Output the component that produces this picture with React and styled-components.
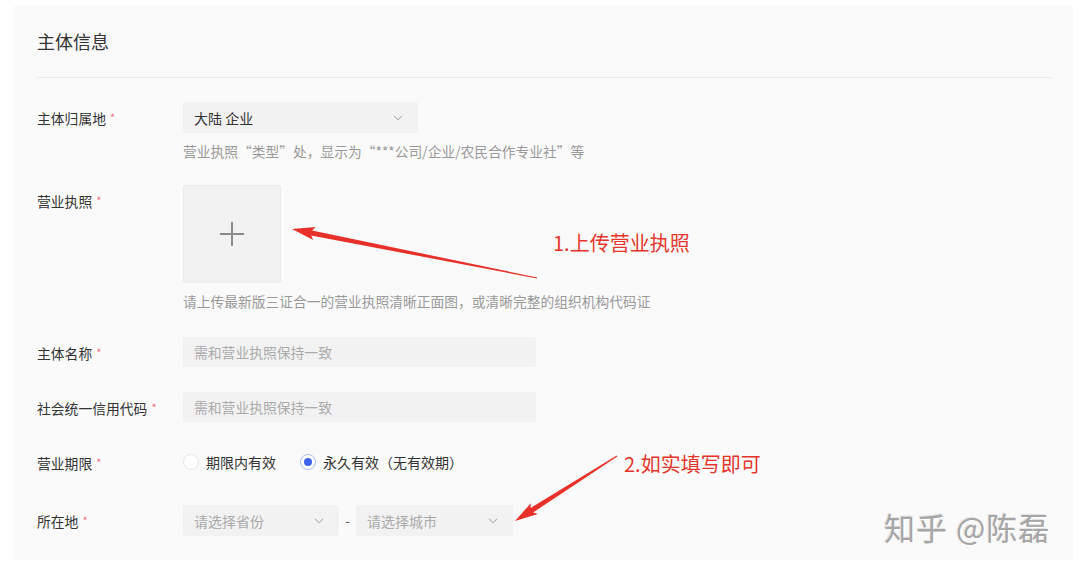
import React from "react";
import styled, { createGlobalStyle } from "styled-components";

const Global = createGlobalStyle`
  html, body { margin: 0; padding: 0; background: #ffffff; }
  body { font-family: "Noto Sans CJK SC", "Noto Sans", sans-serif; color: #333; }
  * { box-sizing: border-box; }
`;

const Page = styled.div`
  position: relative;
  width: 1080px;
  height: 573px;
  padding: 6px 7px 13px 14px;
`;

const Panel = styled.section`
  background: #fafafa;
  height: 554px;
  padding: 23px 21px 23px 23px;
`;

const Title = styled.h2`
  margin: 0;
  font-size: 18px;
  line-height: 24px;
  font-weight: 400;
  color: #333;
`;

const Divider = styled.div`
  height: 1px;
  background: #ececec;
  margin: 24px 0 24px;
`;

const FormItem = styled.div`
  display: flex;
  align-items: flex-start;
  margin-bottom: ${(p) => p.$gap ?? 24}px;
`;

const Label = styled.div`
  width: 146px;
  flex: none;
  font-size: 13.8px;
  line-height: ${(p) => p.$h ?? 31}px;
  color: #333;
  white-space: nowrap;
`;

const Star = styled.span`
  color: #f0707e;
  font-size: 11px;
  margin-left: 4px;
  vertical-align: 2px;
`;

const Control = styled.div`
  display: flex;
  flex-direction: column;
`;

const SelectBox = styled.div`
  width: ${(p) => p.$w}px;
  height: 31px;
  background: #f2f2f2;
  border-radius: 2px;
  display: flex;
  align-items: center;
  justify-content: space-between;
  padding: 0 15px 0 11px;
  font-size: 14px;
  color: ${(p) => (p.$placeholder ? "#aaa" : "#333")};
`;

const Input = styled.div`
  width: 353px;
  height: 30px;
  background: #f2f2f2;
  border-radius: 2px;
  display: flex;
  align-items: center;
  padding: 0 11px;
  font-size: 13.8px;
  color: #aaa;
`;

const Hint = styled.div`
  margin-top: 8px;
  font-size: 13.75px;
  line-height: 20px;
  color: #999;
  white-space: nowrap;
`;

const Upload = styled.div`
  width: 98px;
  height: 98px;
  background: #f2f2f2;
  border: 1px solid #ebebeb;
  border-radius: 2px;
  display: flex;
  align-items: center;
  justify-content: center;
`;

const RadioGroup = styled.div`
  height: 30px;
  display: flex;
  align-items: center;
  gap: 24px;
`;

const RadioItem = styled.label`
  display: flex;
  align-items: center;
  gap: 7px;
  font-size: 14px;
  color: #333;
`;

const RadioDot = styled.span`
  width: 16px;
  height: 16px;
  border-radius: 50%;
  background: #fff;
  border: 1px solid ${(p) => (p.$checked ? "#a9bdf5" : "#e6e6e6")};
  display: flex;
  align-items: center;
  justify-content: center;
  &::after {
    content: "";
    width: 8px;
    height: 8px;
    border-radius: 50%;
    background: ${(p) => (p.$checked ? "#3c64ea" : "transparent")};
  }
`;

const Pair = styled.div`
  display: flex;
  align-items: center;
`;

const Dash = styled.span`
  width: 17px;
  text-align: center;
  font-size: 13px;
  color: #555;
`;

const Note = styled.div`
  position: absolute;
  left: ${(p) => p.$x}px;
  top: ${(p) => p.$y}px;
  font-size: 20px;
  line-height: 26px;
  color: #e4362c;
  white-space: nowrap;
`;

const Watermark = styled.div`
  position: absolute;
  left: 884px;
  top: 507px;
  font-size: 31px;
  line-height: 40px;
  letter-spacing: 1px;
  color: #a6a6a6;
  text-shadow: 1px 1px 0 #fff, -1px -1px 0 #e2e2e2;
  white-space: nowrap;
`;

const Overlay = styled.svg`
  position: absolute;
  left: 0;
  top: 0;
  pointer-events: none;
`;

const Chevron = () => (
  <svg width="10" height="6" viewBox="0 0 10 6">
    <path d="M1 0.8 L5 4.8 L9 0.8" fill="none" stroke="#999" strokeWidth="1" />
  </svg>
);

const Plus = () => (
  <svg width="26" height="26" viewBox="0 0 26 26">
    <path d="M13 1 V25 M1 13 H25" stroke="#8a8a8a" strokeWidth="2" />
  </svg>
);

function arrowPoints(x1, y1, x2, y2, headLen, headW, tailW, neckW) {
  const dx = x2 - x1;
  const dy = y2 - y1;
  const len = Math.hypot(dx, dy);
  const ux = dx / len;
  const uy = dy / len;
  const nx = -uy;
  const ny = ux;
  const neckX = x2 - ux * headLen;
  const neckY = y2 - uy * headLen;
  const barbX = x2 - ux * headLen * 1.15;
  const barbY = y2 - uy * headLen * 1.15;
  const pts = [
    [x1 + nx * tailW, y1 + ny * tailW],
    [neckX + nx * neckW, neckY + ny * neckW],
    [barbX + nx * headW, barbY + ny * headW],
    [x2, y2],
    [barbX - nx * headW, barbY - ny * headW],
    [neckX - nx * neckW, neckY - ny * neckW],
    [x1 - nx * tailW, y1 - ny * tailW],
  ];
  return pts.map((p) => p.map((v) => v.toFixed(1)).join(",")).join(" ");
}

export default function App() {
  return (
    <Page>
      <Global />
      <Panel>
        <Title>主体信息</Title>
        <Divider />

        <FormItem>
          <Label>
            主体归属地<Star>*</Star>
          </Label>
          <Control>
            <SelectBox $w={235}>
              <span>大陆 企业</span>
              <Chevron />
            </SelectBox>
            <Hint>营业执照“类型”处，显示为“***公司/企业/农民合作专业社”等</Hint>
          </Control>
        </FormItem>

        <FormItem $gap={26}>
          <Label>
            营业执照<Star>*</Star>
          </Label>
          <Control>
            <Upload>
              <Plus />
            </Upload>
            <Hint>请上传最新版三证合一的营业执照清晰正面图，或清晰完整的组织机构代码证</Hint>
          </Control>
        </FormItem>

        <FormItem $gap={24}>
          <Label $h={30}>
            主体名称<Star>*</Star>
          </Label>
          <Input>需和营业执照保持一致</Input>
        </FormItem>

        <FormItem $gap={24}>
          <Label $h={30}>
            社会统一信用代码<Star>*</Star>
          </Label>
          <Input>需和营业执照保持一致</Input>
        </FormItem>

        <FormItem $gap={27}>
          <Label $h={30}>
            营业期限<Star>*</Star>
          </Label>
          <RadioGroup>
            <RadioItem>
              <RadioDot />
              期限内有效
            </RadioItem>
            <RadioItem>
              <RadioDot $checked />
              永久有效（无有效期）
            </RadioItem>
          </RadioGroup>
        </FormItem>

        <FormItem $gap={0}>
          <Label>
            所在地<Star>*</Star>
          </Label>
          <Pair>
            <SelectBox $w={156} $placeholder>
              <span>请选择省份</span>
              <Chevron />
            </SelectBox>
            <Dash>-</Dash>
            <SelectBox $w={157} $placeholder>
              <span>请选择城市</span>
              <Chevron />
            </SelectBox>
          </Pair>
        </FormItem>
      </Panel>

      <Overlay width="1080" height="573" viewBox="0 0 1080 573">
        <polygon points={arrowPoints(537, 278, 292, 229, 20, 6.5, 0.5, 2.5)} fill="#e8302a" />
        <polygon points={arrowPoints(617, 456, 515, 521, 20, 6.5, 0.5, 2.5)} fill="#e8302a" />
      </Overlay>

      <Note $x={553} $y={230}>1.上传营业执照</Note>
      <Note $x={624} $y={451}>2.如实填写即可</Note>
      <Watermark>知乎 @陈磊</Watermark>
    </Page>
  );
}
